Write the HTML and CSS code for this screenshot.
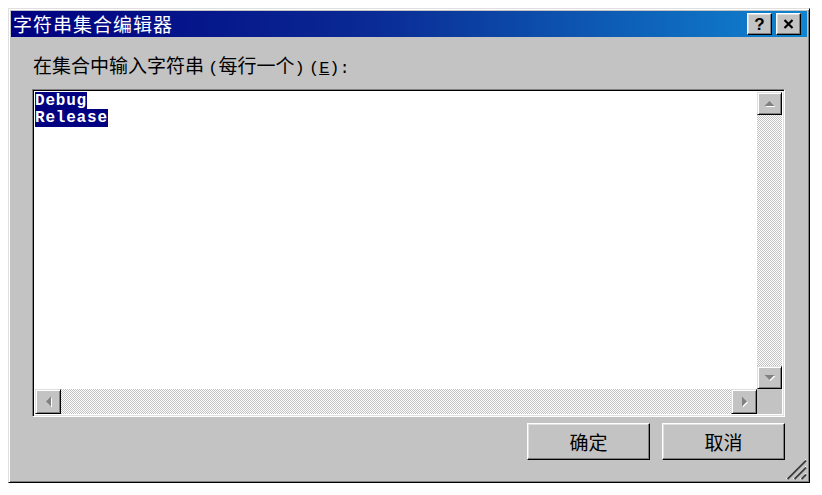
FILE: index.html
```html
<!DOCTYPE html>
<html lang="zh-CN">
<head>
<meta charset="utf-8">
<title>字符串集合编辑器</title>
<link rel="stylesheet" href="styles.css">
</head>
<body>
<div class="window">
  <div class="titlebar">
    <span class="title">字符串集合编辑器</span>
    <div class="title-buttons">
      <span class="tbtn help">?</span>
      <span class="tbtn close">
        <svg width="11" height="10" viewBox="0 0 11 10"><path d="M1.5 1 L9.5 9 M9.5 1 L1.5 9" stroke="#000" stroke-width="2.2"/></svg>
      </span>
    </div>
  </div>
  <div class="content">
    <div class="label">在集合中输入字符串 <span class="hw">(</span>每行一个<span class="hw">)</span> <span class="hw">(<u>E</u>):</span></div>
    <div class="editbox">
      <div class="text">
        <div class="line"><span class="sel">Debug</span></div>
        <div class="line"><span class="sel">Release</span></div>
      </div>
      <div class="vscroll">
        <span class="sbtn vbtn"><svg width="12" height="7" viewBox="0 0 12 7"><path d="M1.5 7 L6.5 2 L11.5 7 Z" fill="#fff"/><path d="M0.5 6 L5.5 1 L10.5 6 Z" fill="#808080"/></svg></span>
        <span class="track vtrack"></span>
        <span class="sbtn vbtn"><svg width="12" height="7" viewBox="0 0 12 7"><path d="M1.5 2 L6.5 7 L11.5 2 Z" fill="#fff"/><path d="M0.5 1 L5.5 6 L10.5 1 Z" fill="#808080"/></svg></span>
      </div>
      <div class="hscroll">
        <span class="sbtn hbtn"><svg width="7" height="12" viewBox="0 0 7 12"><path d="M7 1.5 L2 6.5 L7 11.5 Z" fill="#fff"/><path d="M6 0.5 L1 5.5 L6 10.5 Z" fill="#808080"/></svg></span>
        <span class="track htrack"></span>
        <span class="sbtn hbtn"><svg width="7" height="12" viewBox="0 0 7 12"><path d="M2 1.5 L7 6.5 L2 11.5 Z" fill="#fff"/><path d="M1 0.5 L6 5.5 L1 10.5 Z" fill="#808080"/></svg></span>
      </div>
      <div class="corner"></div>
    </div>
    <div class="actions">
      <span class="btn">确定</span>
      <span class="btn">取消</span>
    </div>
  </div>
  <svg class="grip" width="24" height="24" viewBox="0 0 24 24">
    <path d="M23 3 L3 23 M23 10 L10 23 M23 17 L17 23" stroke="#fff" stroke-width="1"/>
    <path d="M23 4.5 L4.5 23 M23 11.5 L11.5 23 M23 18.5 L18.5 23" stroke="#404040" stroke-width="2"/>
  </svg>
</div>
</body>
</html>
```

FILE: styles.css
```css
html, body {
  margin: 0;
  padding: 0;
  background: #ffffff;
}
body {
  width: 822px;
  height: 495px;
  overflow: hidden;
  font-family: "Noto Sans CJK SC", "Noto Sans", sans-serif;
}
.window {
  position: relative;
  margin: 8px 0 0 8px;
  width: 802px;
  height: 475px;
  box-sizing: border-box;
  background: #c3c3c3;
  border: 1px solid;
  border-color: #dfdfdf #000 #000 #dfdfdf;
  box-shadow: inset 1px 1px #fff, inset -1px -1px #808080;
  padding: 2px;
  display: flex;
  flex-direction: column;
}
.titlebar {
  height: 26px;
  display: flex;
  align-items: center;
  justify-content: space-between;
  background: linear-gradient(90deg, #000080 0%, #0a2a94 45%, #1084d0 100%);
  padding: 0 6px 0 2px;
}
.title {
  color: #fff;
  font-size: 19px;
  line-height: 26px;
  letter-spacing: 1px;
}
.title-buttons {
  display: flex;
  gap: 4px;
}
.tbtn {
  width: 25px;
  height: 22px;
  box-sizing: border-box;
  background: #c3c3c3;
  border: 1px solid;
  border-color: #fff #000 #000 #fff;
  box-shadow: inset -1px -1px #808080, inset 1px 1px #dfdfdf;
  display: flex;
  align-items: center;
  justify-content: center;
}
.help {
  font-family: "Liberation Sans", Arial, sans-serif;
  font-weight: bold;
  font-size: 17px;
  line-height: 1;
  color: #000;
}
.content {
  flex: 1;
  display: flex;
  flex-direction: column;
  padding: 17px 22px 0 21px;
}
.label {
  font-size: 19px;
  line-height: 22px;
  color: #000;
  padding-left: 1px;
}
.label .hw {
  font-family: "Liberation Mono", "Courier New", monospace;
  font-size: 17px;
}
.label u {
  text-decoration-thickness: 1px;
}
.editbox {
  margin-top: 9px;
  height: 328px;
  box-sizing: border-box;
  border: 1px solid;
  border-color: #808080 #fff #fff #808080;
  box-shadow: inset 1px 1px #000, inset -1px -1px #dfdfdf;
  padding: 2px 2px 2px 2px;
  background: #fff;
  display: grid;
  grid-template-columns: 1fr 25px;
  grid-template-rows: 1fr 25px;
}
.text {
  padding: 1px 0;
  font-family: "Liberation Mono", "Courier New", monospace;
  font-weight: bold;
  font-size: 16px;
  letter-spacing: 0.8px;
  line-height: 17px;
}
.sel {
  background: #000080;
  color: #fff;
}
.vscroll {
  display: flex;
  flex-direction: column;
}
.hscroll {
  display: flex;
}
.sbtn {
  box-sizing: border-box;
  background: #c3c3c3;
  border: 1px solid;
  border-color: #dfdfdf #000 #000 #dfdfdf;
  box-shadow: inset 1px 1px #fff, inset -1px -1px #808080;
  display: flex;
  align-items: center;
  justify-content: center;
  flex: none;
}
.vbtn {
  width: 25px;
  height: 23px;
}
.hbtn {
  width: 26px;
  height: 25px;
}
.track {
  flex: 1;
  background-color: #c3c3c3;
  background-image: conic-gradient(#ffffff 25%, #c3c3c3 0 50%, #ffffff 0 75%, #c3c3c3 0);
  background-size: 2px 2px;
}
.corner {
  background: #c3c3c3;
}
.actions {
  margin-top: 6px;
  display: flex;
  justify-content: flex-end;
  gap: 12px;
}
.btn {
  width: 123px;
  height: 37px;
  box-sizing: border-box;
  background: #c3c3c3;
  border: 1px solid;
  border-color: #fff #000 #000 #fff;
  box-shadow: inset -1px -1px #808080, inset 1px 1px #dfdfdf;
  display: flex;
  align-items: center;
  justify-content: center;
  font-size: 19px;
  color: #000;
}
.grip {
  position: absolute;
  right: 2px;
  bottom: 2px;
}
```
